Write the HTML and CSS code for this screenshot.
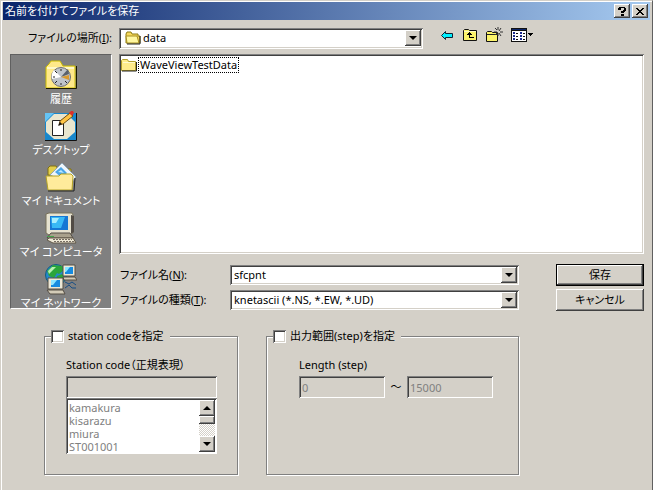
FILE: index.html
```html
<!DOCTYPE html>
<html lang="ja">
<head>
    <meta charset="UTF-8">
    <meta name="viewport" content="width=device-width, initial-scale=1.0">
    <title>名前を付けてファイルを保存</title>
    <link rel="stylesheet" href="styles.css">
</head>
<body>
    <form class="dialog">
        <!-- Title bar -->
        <header class="titlebar">
            <h1>名前を付けてファイルを保存</h1>
            <button type="button" class="caption-button" aria-label="ヘルプ">
                <svg width="8" height="9" viewBox="0 0 8 9"><path d="M1 0h6v1h1v3h-1v1h-1v1H3V4h2V3h1V1H3v2H0V1h1zM3 7h3v2H3z" fill="#000"/></svg>
            </button>
            <button type="button" class="caption-button" aria-label="閉じる">
                <svg width="8" height="7" viewBox="0 0 8 7"><path d="M0 0h2v1h1v1h2V1h1V0h2v1H7v1H6v1H5v1h1v1h1v1h1v1H6V6H5V5H3v1H2v1H0V6h1V5h1V4h1V3H2V2H1V1H0z" fill="#000"/></svg>
            </button>
        </header>

        <!-- Location row -->
        <div class="location">
            <label for="location">ファイルの場所(<u>I</u>):</label>
            <div class="combo">
                <svg class="folder" width="16" height="14" viewBox="0 0 16 14">
                    <path d="M1 12V3l1-2h4l1 2h6v2h2v7z" fill="#f7d95c" stroke="#8c7a10"/>
                    <path d="M2 12L1 5h11l2 7z" fill="#fff7a0" stroke="#a89020"/>
                    <path d="M2 13h13V5" fill="none" stroke="#222"/>
                </svg>
                <select id="location"><option>data</option></select>
                <span class="arrow"></span>
            </div>
            <div class="toolbar">
                <button type="button" aria-label="戻る">
                    <svg width="14" height="16" viewBox="0 0 14 16"><path d="M1.5 8.5l4-4v2h7v4h-7v2z" fill="#00f0ff" stroke="#123"/></svg>
                </button>
                <button type="button" aria-label="1 つ上のフォルダへ">
                    <svg width="16" height="16" viewBox="0 0 16 16">
                        <path d="M1.5 13.5v-10l1-1h4l1 1h7v10z" fill="#fbf36a" stroke="#111"/>
                        <path d="M3 8h2V7h1V6h1V5h1v1h1v1h1v1H8v2h4v1H7V8z" fill="#000"/>
                        <path d="M2 4.5h12" stroke="#fffbc0"/>
                    </svg>
                </button>
                <button type="button" aria-label="新しいフォルダの作成">
                    <svg width="17" height="16" viewBox="0 0 17 16">
                        <path d="M.5 14.5v-9l1-1h4l1 1h5v9z" fill="#fbf36a" stroke="#111"/>
                        <path d="M1 7.5h11" stroke="#222"/>
                        <path d="M12 0v3M12 6v3M8 5h3M14 5h3M9 1l2 2M15 1l-2 3M9 8l2-2M15 9l-2-3" stroke="#333"/>
                    </svg>
                </button>
                <button type="button" aria-label="表示">
                    <svg width="23" height="16" viewBox="0 0 23 16" shape-rendering="crispEdges">
                        <path d="M0 1h16v14H0z" fill="#111"/>
                        <path d="M1 4h14v10H1z" fill="#fff"/>
                        <path d="M1 2h14v1H1z" fill="#0a246a"/>
                        <path d="M2 5h2v2H2zM2 8h2v2H2zM2 11h2v2H2zM9 5h2v2H9zM9 8h2v2H9zM9 11h2v2H9z" fill="#1b2a8c"/>
                        <path d="M5 6h2v1H5zM5 9h2v1H5zM5 12h2v1H5zM12 6h2v1h-2zM12 9h2v1h-2zM12 12h2v1h-2z" fill="#111"/>
                        <path d="M17 6h5v1h-1v1h-1v1h-1V8h-1V7h-1z" fill="#000"/>
                    </svg>
                </button>
            </div>
        </div>

        <div class="main">
            <!-- Places bar -->
            <nav class="places">
                <a href="#history">
                    <svg width="32" height="32" viewBox="0 0 32 32">
                        <path d="M1 29V8l3-3 2-3h9l3 5h12v22z" fill="#ffe98a" stroke="#cbbd00"/>
                        <path d="M2 8h27v2H2z" fill="#fff9c8"/>
                        <path d="M1 29.5h30.5V7" fill="none" stroke="#1c1a00"/>
                        <circle cx="16" cy="18" r="9.5" fill="#bfc4ca" stroke="#6d6d70"/>
                        <path d="M16 18L9 11a10 10 0 0 0-2 9z" fill="#fff"/>
                        <path d="M16 18l7-8 1 5z" fill="#59616b"/>
                        <path d="M16 18l8-2v5z" fill="#d99a2e"/>
                        <path d="M16 10v2M16 24v2M8 18h2M10 24l2-2M22 24l-2-2M10 12l2 2" stroke="#222"/>
                    </svg>
                    <span>履歴</span>
                </a>
                <a href="#desktop">
                    <svg width="32" height="32" viewBox="0 0 32 32">
                        <path d="M0 3h31v27H0z" fill="#1787cc"/>
                        <path d="M0 3h9L0 12z" fill="#65c4f5"/>
                        <path d="M9 4h13l8 8v10l-8 7H9l-8-7V12z" fill="#e9e6cf"/>
                        <path d="M0 30.5h31.5V3" fill="none" stroke="#111"/>
                        <path d="M7.5 10.5h11v15h-11z" fill="#fff" stroke="#222"/>
                        <path d="M14 15l1-4L25 3l3 3-10 8z" fill="#ffc545" stroke="#6b4a10"/>
                        <path d="M24 3l2-2h2l1 2-2 3z" fill="#d9302c"/>
                        <path d="M13 16l2-4 2 2z" fill="#111"/>
                    </svg>
                    <span>デスクトップ</span>
                </a>
                <a href="#documents">
                    <svg width="32" height="32" viewBox="0 0 32 32">
                        <path d="M3 14V7l2-2h6l2 3h13v8z" fill="#e4cf4c" stroke="#807010"/>
                        <path d="M5 14L17 2l14 14-6 7z" fill="#eef5fb" stroke="#8fa6b8"/>
                        <path d="M10 11l6-5 6 6-5 5z" fill="#4aa5e8"/>
                        <path d="M13 11l3-2 3 3z" fill="#b8e8ff"/>
                        <path d="M23 14l4 3M21 17l5 3" stroke="#5f7fae"/>
                        <path d="M1 15h13l2-2h10l2 2-1 14H3z" fill="#ffeb9b" stroke="#b4a326"/>
                        <path d="M3 30h26l1-13" fill="none" stroke="#222"/>
                    </svg>
                    <span>マイ ドキュメント</span>
                </a>
                <a href="#computer">
                    <svg width="32" height="32" viewBox="0 0 32 32">
                        <path d="M1 2l3-1h23l1 2v18l-3 2H4l-3-2z" fill="#e6e2d0" stroke="#77705a"/>
                        <path d="M26 3l3 1v16l-3 2z" fill="#514b45"/>
                        <path d="M5 4h18v14H5z" fill="#1677d4"/>
                        <path d="M6 5h14l-4 11H7z" fill="#39b9f5"/>
                        <path d="M7 6h7l-3 5H7z" fill="#a7edff"/>
                        <path d="M6 21h19l3 5H2z" fill="#a9a18d" stroke="#554f48"/>
                        <path d="M4 26h24l3 5H8l-6-3z" fill="#eee8d5" stroke="#625948"/>
                        <path d="M8 27.5h19M9 29.5h20" stroke="#766d62" stroke-dasharray="2 1"/>
                        <path d="M2 24.5h7" stroke="#44a34c"/>
                    </svg>
                    <span>マイ コンピュータ</span>
                </a>
                <a href="#network">
                    <svg width="32" height="32" viewBox="0 0 32 32">
                        <circle cx="11" cy="12" r="10.5" fill="#2388ce" stroke="#145c80"/>
                        <path d="M2 8l6-6 9 1 2 4-5 4-2-1-3 5-5-2zM12 13l5-2 3 4-4 6-5-3z" fill="#2aa53a"/>
                        <path d="M3 8l4-4h4L7 8l-3 3z" fill="#b6f1b1"/>
                        <path d="M18 2h12v11H18z" fill="#ece7d5" stroke="#544e45"/>
                        <path d="M20 4h8v7h-8z" fill="#168be0"/>
                        <path d="M20 4h5l-4 5h-1z" fill="#8ce5ff"/>
                        <path d="M18 14h12l2 3H19z" fill="#d4ccb8" stroke="#544e45"/>
                        <path d="M3 15h15v11H3z" fill="#ece7d5" stroke="#544e45"/>
                        <path d="M6 17h9v7H6z" fill="#168be0"/>
                        <path d="M6 17h6l-4 5H6z" fill="#8ce5ff"/>
                        <path d="M2 27h16l2 4H5z" fill="#d4ccb8" stroke="#544e45"/>
                        <path d="M20 19l4 2 3-2 4 3M20 25l4-3 3 3h4" fill="none" stroke="#174e85"/>
                    </svg>
                    <span>マイ ネットワーク</span>
                </a>
            </nav>

            <div class="content">
                <!-- File list -->
                <div class="files">
                    <a class="file" href="#WaveViewTestData">
                        <svg width="17" height="14" viewBox="0 0 17 14">
                            <path d="M.5 12.5v-10l1-1h5l1 2h7v9z" fill="#ffec8b" stroke="#b3a02d"/>
                            <path d="M2 4.5h12" stroke="#fffbd0"/>
                            <path d="M1 13h14.5V4" fill="none" stroke="#222"/>
                        </svg>
                        <span>WaveViewTestData</span>
                    </a>
                </div>

                <!-- Name, type and the two buttons -->
                <div class="fields">
                    <label for="filename">ファイル名(<u>N</u>):</label>
                    <div class="combo">
                        <input type="text" id="filename" value="sfcpnt">
                        <span class="arrow"></span>
                    </div>
                    <button type="submit" class="push default">保存</button>

                    <label for="filetype">ファイルの種類(<u>T</u>):</label>
                    <div class="combo">
                        <select id="filetype"><option>knetascii (*.NS, *.EW, *.UD)</option></select>
                        <span class="arrow"></span>
                    </div>
                    <button type="button" class="push">キャンセル</button>
                </div>
            </div>
        </div>

        <!-- Extra options -->
        <div class="options">
            <fieldset>
                <legend><input type="checkbox" id="useStation"><label for="useStation">station codeを指定</label></legend>
                <label class="caption" for="station">Station code（正規表現）</label>
                <input type="text" class="edit" id="station" disabled>
                <div class="listbox">
                    <select size="4" aria-label="Station code" disabled>
                        <option>kamakura</option>
                        <option>kisarazu</option>
                        <option>miura</option>
                        <option>ST001001</option>
                    </select>
                    <div class="scrollbar">
                        <span class="arrow up"></span>
                        <span class="thumb"></span>
                        <span class="arrow"></span>
                    </div>
                </div>
            </fieldset>
            <fieldset class="range">
                <legend><input type="checkbox" id="useRange"><label for="useRange">出力範囲(step)を指定</label></legend>
                <label class="caption" for="from">Length (step)</label>
                <div class="range-row">
                    <input type="text" class="edit" id="from" value="0" disabled>
                    <span>～</span>
                    <input type="text" class="edit" aria-label="Length end" value="15000" disabled>
                </div>
            </fieldset>
        </div>
    </form>
</body>
</html>
```
FILE: styles.css
```css
* {
    margin: 0;
    padding: 0;
    box-sizing: border-box;
}
body {
    font-family: "Noto Sans", "Noto Sans CJK JP", sans-serif;
    font-size: 11px;
    line-height: 16px;
    font-feature-settings: "palt";
    color: #000;
    background: #d4d0c8;
}
input, select, button {
    font: inherit;
    font-feature-settings: inherit;
    color: inherit;
    border: none;
    border-radius: 0;
    outline: none;
    appearance: none;
}
svg {
    display: block;
    flex: none;
}
.dialog {
    min-height: 100vh;
    padding: 1px 2px 15px 2px;
    border: 1px solid #d4d0c8;
    border-right-color: #606060;
    border-bottom-color: #808080;
    box-shadow: inset 1px 1px #fff;
}

/* Title bar */
.titlebar {
    display: flex;
    align-items: center;
    height: 18px;
    padding: 0 2px;
    background: linear-gradient(to right, #0a246a, #a6caf0);
}
.titlebar h1 {
    flex: 1;
    font-size: 11px;
    font-weight: normal;
    color: #fff;
}
.caption-button {
    display: flex;
    align-items: center;
    justify-content: center;
    width: 16px;
    height: 14px;
    margin-left: 2px;
    background: #d4d0c8;
    box-shadow: inset -1px -1px #404040, inset 1px 1px #fff, inset -2px -2px #808080;
}

/* Combo boxes */
.combo {
    display: flex;
    align-items: center;
    height: 20px;
    padding: 2px;
    background: #fff;
    box-shadow: inset 1px 1px #808080, inset -1px -1px #fff, inset 2px 2px #404040, inset -2px -2px #d4d0c8;
}
.combo select, .combo input {
    flex: 1;
    min-width: 0;
    height: 16px;
    padding: 0 2px;
    background: transparent;
}
.arrow {
    display: flex;
    align-items: center;
    justify-content: center;
    flex: none;
    width: 16px;
    height: 16px;
    background: #d4d0c8;
    box-shadow: inset -1px -1px #404040, inset 1px 1px #fff, inset -2px -2px #808080;
}
.arrow::before {
    content: '';
    border: 4px solid transparent;
    border-top-color: #000;
    border-bottom: none;
}
.arrow.up::before {
    border-top: none;
    border-bottom: 4px solid #000;
}

/* Location row */
.location {
    display: flex;
    align-items: center;
    padding: 7px 6px 5px 25px;
}
.location label {
    width: 91px;
    white-space: nowrap;
}
.location .combo {
    flex: 1;
    height: 21px;
}
.location .folder {
    margin-left: 4px;
}
.toolbar {
    display: flex;
    align-items: center;
    gap: 8px;
    width: 221px;
    padding: 0 0 6px 17px;
}
.toolbar button {
    background: transparent;
}

/* Places bar and file list */
.main {
    display: grid;
    grid-template-columns: 102px 1fr;
    gap: 7px;
    padding: 0 6px 0 7px;
}
.places {
    display: flex;
    flex-direction: column;
    gap: 3px;
    height: 255px;
    padding-top: 4px;
    overflow: hidden;
    background: #808080;
    border: 1px solid #606060;
    border-right-color: #fff;
    border-bottom-color: #fff;
}
.places a {
    display: flex;
    flex-direction: column;
    align-items: center;
    flex: none;
    color: #fff;
    text-decoration: none;
}
.files {
    height: 200px;
    padding: 3px 2px;
    background: #fff;
    box-shadow: inset 1px 1px #808080, inset -1px -1px #fff, inset 2px 2px #404040, inset -2px -2px #d4d0c8;
}
.file {
    display: inline-flex;
    align-items: center;
    color: #000;
    text-decoration: none;
}
.file span {
    padding: 0 1px;
    border: 1px dotted #000;
    line-height: 14px;
}

/* File name and type */
.fields {
    display: grid;
    grid-template-columns: 103px 1fr 88px;
    column-gap: 8px;
    row-gap: 3px;
    align-items: center;
    padding-top: 10px;
}
.fields label {
    padding-left: 1px;
}
.fields .combo {
    margin-right: 29px;
}
.push {
    height: 22px;
    background: #d4d0c8;
    box-shadow: inset -1px -1px #404040, inset 1px 1px #fff, inset -2px -2px #808080;
}
.push.default {
    border: 1px solid #000;
}

/* Option groups */
.options {
    display: grid;
    grid-template-columns: 194px 1fr;
    gap: 28px;
    padding: 17px 131px 0 41px;
}
fieldset {
    min-width: 0;
    padding: 13px 20px 20px 21px;
    border: 1px solid #808080;
    box-shadow: 1px 1px #fff, inset 1px 1px #fff;
}
legend {
    display: flex;
    align-items: center;
    gap: 4px;
    margin-left: -15px;
    padding-right: 6px;
    background: #d4d0c8;
}
.range {
    padding-left: 32px;
    padding-right: 25px;
}
.range legend {
    margin-left: -26px;
}
input[type="checkbox"] {
    width: 13px;
    height: 13px;
    background: #fff;
    box-shadow: inset 1px 1px #808080, inset -1px -1px #fff, inset 2px 2px #404040, inset -2px -2px #d4d0c8;
}
.caption {
    display: block;
    margin-bottom: 3px;
}
.edit {
    width: 100%;
    min-width: 0;
    height: 22px;
    padding: 0 3px;
    color: #808080;
    background: #d4d0c8;
    box-shadow: inset 1px 1px #808080, inset -1px -1px #fff, inset 2px 2px #404040;
}
fieldset > .edit {
    display: block;
}
.listbox {
    display: flex;
    height: 56px;
    padding: 2px;
    background: #fff;
    box-shadow: inset 1px 1px #808080, inset -1px -1px #fff, inset 2px 2px #404040;
}
.listbox select {
    flex: 1;
    height: 52px;
    overflow: hidden;
    background: #fff;
    opacity: 1;
}
.listbox option {
    min-height: 13px;
    height: 13px;
    padding: 0 1px;
    line-height: 13px;
    color: #808080;
}
.scrollbar {
    display: flex;
    flex-direction: column;
    width: 16px;
    background: repeating-conic-gradient(#fff 0 25%, #d4d0c8 0 50%) 0 0 / 2px 2px;
}
.thumb {
    flex: none;
    height: 8px;
    background: #d4d0c8;
    box-shadow: inset -1px -1px #404040, inset 1px 1px #fff, inset -2px -2px #808080;
}
.scrollbar .arrow:last-child {
    margin-top: auto;
}
.range-row {
    display: flex;
    align-items: center;
}
.range-row span {
    flex: none;
    width: 22px;
    text-align: center;
}
```
